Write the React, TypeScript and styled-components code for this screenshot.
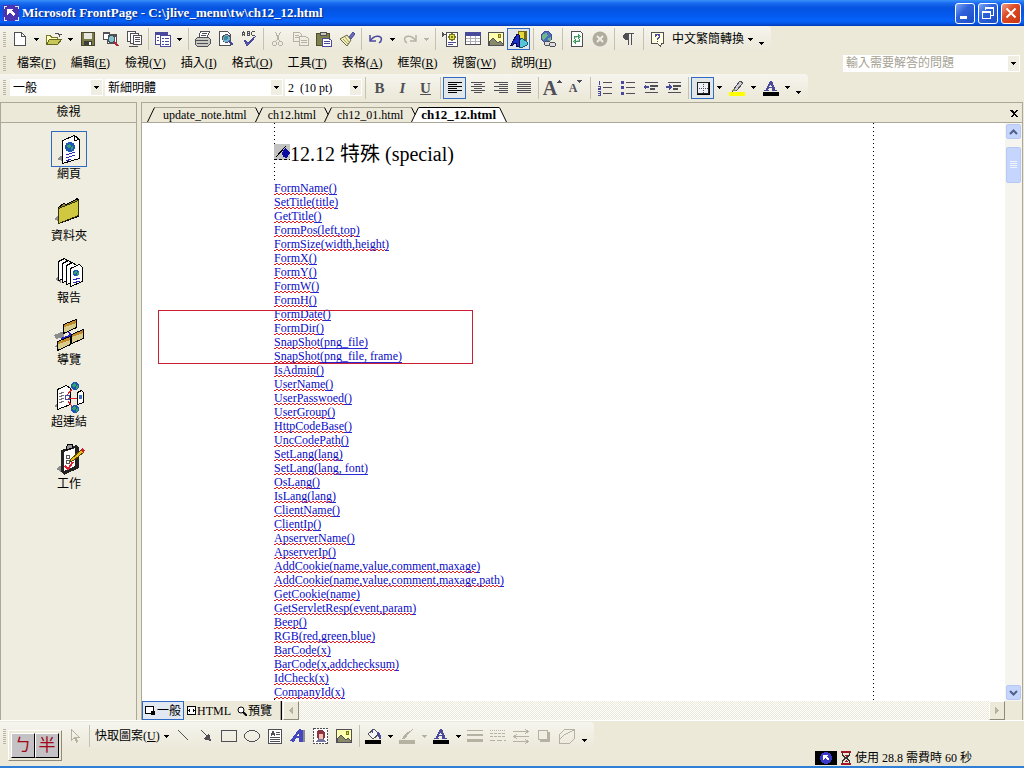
import React from "react";
import styled, { createGlobalStyle, css } from "styled-components";

const GlobalStyle = createGlobalStyle`
  * { box-sizing: border-box; }
  body {
    margin: 0;
    background: #ece9d8;
    color: #000;
    font: 12px/14px "Liberation Serif", "Noto Sans CJK TC", serif;
  }
  button, input, select { font: inherit; color: inherit; margin: 0; padding: 0; border: 0; background: none; border-radius: 0; }
  svg { display: block; flex: none; }
`;

/* ---------- frame ---------- */
const Window = styled.div`
  display: flex;
  flex-direction: column;
  height: 100vh;
  border-bottom: 2px solid #2f7fd8;
  overflow: hidden;
`;

const TitleBar = styled.header`
  display: flex;
  align-items: center;
  flex: none;
  height: 26px;
  padding: 0 3px;
  gap: 3px;
  background: linear-gradient(#3a92fa 0, #1a6cf0 3px, #0553e0 8px, #0459ee 15px, #0663fb 21px, #0450dd 24px, #0338b4 26px);
`;

const Title = styled.h1`
  flex: 1;
  margin: 0;
  font-size: 13px;
  line-height: 16px;
  color: #fff;
  text-shadow: 1px 1px 1px #0a2a80;
  white-space: nowrap;
  overflow: hidden;
`;

const WindowButton = styled.button<{ $close?: boolean }>`
  display: grid;
  place-items: center;
  width: 20px;
  height: 21px;
  border: 1px solid #fff;
  border-radius: 3px;
  background: ${(p) =>
    p.$close
      ? "linear-gradient(135deg, #f0a088, #dd4a24 40%, #c8350f)"
      : "linear-gradient(135deg, #7fa6f2, #2f63dc 40%, #1a4bc4)"};
`;

const BarRow = styled.div<{ $height: number }>`
  display: flex;
  align-items: center;
  justify-content: space-between;
  flex: none;
  height: ${(p) => p.$height}px;
  padding-right: 4px;
`;

const Bar = styled.div`
  display: flex;
  align-items: center;
  height: 100%;
  padding-right: 4px;
  border-radius: 0 4px 4px 0;
  background: linear-gradient(#f6f5ee, #efede0 60%, #ebe8d8);
  white-space: nowrap;
`;

const Grip = styled.span`
  flex: none;
  width: 3px;
  height: 15px;
  margin: 0 2px 0 3px;
  background: repeating-linear-gradient(#b9b6a4 0 1px, transparent 1px 2px);
`;

const ToolButton = styled.button<{ $active?: boolean }>`
  display: grid;
  place-items: center;
  flex: none;
  width: 23px;
  height: 22px;
  ${(p) =>
    p.$active &&
    css`
      border: 1px solid #316ac5;
      background: #e1e6e8;
    `}
`;

const ArrowButton = styled.button`
  display: grid;
  place-items: center;
  flex: none;
  width: 11px;
  height: 22px;
`;

const OverflowButton = styled(ArrowButton)`
  align-items: end;
  padding-bottom: 5px;
`;

const Sep = styled.span`
  flex: none;
  width: 1px;
  height: 22px;
  margin: 0 2px 0 3px;
  background: #c5c2b0;
`;

const TextButton = styled.button`
  display: flex;
  align-items: center;
  gap: 4px;
  height: 22px;
  padding: 0 3px;
  white-space: nowrap;
`;

const MenuButton = styled.button`
  height: 20px;
  padding: 0 8px 0 7px;
  white-space: nowrap;
`;

const MenuNav = styled.nav`
  display: flex;
  align-items: center;
`;

const MenuItems = styled.div`
  display: flex;
  padding-left: 2px;
`;

const Combo = styled.label<{ $width: number; $muted?: boolean }>`
  display: grid;
  grid-template-columns: 1fr 13px;
  align-items: center;
  flex: none;
  width: ${(p) => p.$width}px;
  height: 17px;
  margin-left: 2px;
  background: #fff;
  color: ${(p) => (p.$muted ? "#a5a293" : "#000")};

  select, input {
    grid-area: 1 / 1 / 2 / 3;
    width: 100%;
    height: 17px;
    padding: 0 3px;
    appearance: none;
    outline: 0;
    white-space: pre;
  }
  input::placeholder { color: #a5a293; opacity: 1; }
`;

const ComboArrow = styled.span`
  grid-area: 1 / 2 / 2 / 3;
  display: grid;
  place-items: center;
  height: 15px;
  margin: 1px;
  background: #f0eee2;
  pointer-events: none;
`;

/* ---------- workspace ---------- */
const Workspace = styled.main`
  display: flex;
  flex: 1;
  min-height: 0;
  gap: 4px;
  margin-top: 1px;
  padding-right: 1px;
`;

const Views = styled.aside`
  flex: none;
  width: 137px;
  border: 1px solid #aca899;
  border-width: 1px 1px 0;
  background: #efeddf;
`;

const ViewsTitle = styled.h2`
  margin: 0;
  height: 20px;
  border-bottom: 1px solid #aca899;
  font-size: 12px;
  font-weight: 400;
  line-height: 19px;
  text-align: center;
  background: #ece9d8;
`;

const ViewsList = styled.div`
  display: flex;
  flex-direction: column;
  align-items: center;
  gap: 12px;
  padding: 8px 0 0 1px;
`;

const ViewButton = styled.button`
  display: flex;
  flex-direction: column;
  align-items: center;
  height: 50px;
`;

const ViewIcon = styled.span<{ $active?: boolean }>`
  display: grid;
  place-items: center;
  width: 36px;
  height: 36px;
  border: 1px solid ${(p) => (p.$active ? "#316ac5" : "transparent")};
`;

const DocPanel = styled.section`
  display: flex;
  flex-direction: column;
  flex: 1;
  min-width: 0;
  border: 1px solid #aca899;
  border-bottom: 0;
`;

const TabStrip = styled.div`
  display: flex;
  align-items: flex-end;
  flex: none;
  height: 20px;
  padding-left: 5px;
  border-bottom: 1px solid #aca899;
`;

const TabButton = styled.button<{ $active?: boolean }>`
  height: 15px;
  padding: 0 8px 0 5px;
  border-top: 1px solid #aca899;
  line-height: 14px;

  &:first-of-type { padding-left: 8px; }

  ${(p) =>
    p.$active &&
    css`
      padding: 0 3px 0 2px;
      border-top-color: #000;
      font-size: 13px;
      font-weight: 700;
      background: #fff;
    `}
`;

const CloseDoc = styled.button`
  display: grid;
  place-items: center;
  width: 16px;
  height: 16px;
  margin-left: auto;
`;

const Editor = styled.div`
  display: flex;
  flex: 1;
  min-height: 0;
`;

const Canvas = styled.div`
  flex: 1;
  min-width: 0;
  padding-left: 1px;
  overflow: hidden;
  background: #fff;
`;

const Page = styled.article`
  position: relative;
  max-width: 600px;
  min-height: 100%;
  margin: 0 auto;
  padding-top: 18px;
  background:
    repeating-linear-gradient(#000 0 1px, transparent 1px 4px) 0 0 / 1px 100% no-repeat,
    repeating-linear-gradient(#000 0 1px, transparent 1px 4px) 100% 0 / 1px 100% no-repeat;
`;

const Heading = styled.h2`
  display: flex;
  align-items: center;
  margin: 0 0 14px;
  height: 26px;
  font-size: 20px;
  font-weight: 400;
  line-height: 26px;
  white-space: nowrap;
`;

const Anchor = styled.span`
  align-self: flex-start;
  margin-top: 3px;
  background: #c3c3c3;
`;

const FunctionList = styled.ul`
  margin: 0;
  padding: 0;
  list-style: none;

  li { height: 14px; white-space: nowrap; }
`;

const FunctionLink = styled.a`
  display: inline-block;
  height: 14px;
  color: #0a0ac8;
  text-decoration: none;
  background: #fff;
  box-shadow: inset 0 -1px #2a2ad0;
`;

const Misspelt = styled.span`
  display: inline-block;
  height: 14px;
  background:
    repeating-linear-gradient(90deg, #e02020 0 2px, #fff 2px 4px) 0 100% / 100% 1px no-repeat,
    repeating-linear-gradient(90deg, transparent 0 2px, #e02020 2px 4px) 0 12px / 100% 1px no-repeat;
`;

const Highlight = styled.div`
  position: absolute;
  top: 187px;
  left: -116px;
  width: 315px;
  height: 54px;
  border: 1px solid #cc1f36;
  pointer-events: none;
`;

const VScroll = styled.div`
  display: flex;
  flex-direction: column;
  flex: none;
  width: 17px;
  padding: 1px;
  background: #f5f4ee;
`;

const ScrollButton = styled.button`
  display: grid;
  place-items: center;
  flex: none;
  width: 15px;
  height: 15px;
  border: 1px solid #b6c9f5;
  border-radius: 2px;
  background: #c6d5fd;
`;

const Thumb = styled(ScrollButton)`
  height: 36px;
  margin: 8px 0 auto;
`;

const ViewRow = styled.div`
  display: flex;
  flex: none;
  height: 19px;
`;

const ModeButton = styled.button<{ $active?: boolean }>`
  display: flex;
  align-items: center;
  gap: 1px;
  height: 19px;
  padding: 0 2px;
  border: 1px solid ${(p) => (p.$active ? "#316ac5" : "transparent")};
  background: ${(p) => (p.$active ? "#e1e8f2" : "transparent")};
  white-space: nowrap;
`;

const Splitter = styled.span`
  width: 2px;
  margin: 0 1px 0 5px;
  background: linear-gradient(90deg, #aca899 50%, #000 50%);
`;

const HTrack = styled.div`
  flex: 1;
  background: repeating-conic-gradient(#ece9d8 0 25%, #fff 0 50%) 0 0 / 2px 2px;
`;

const HScrollButton = styled.button`
  display: grid;
  place-items: center;
  width: 16px;
  border: 1px solid #fff;
  border-right-color: #8d8a7b;
  border-bottom-color: #8d8a7b;
  background: #ece9d8;
`;

const Corner = styled.span`
  width: 17px;
`;

/* ---------- footer ---------- */
const Footer = styled.footer`
  position: relative;
  flex: none;
  padding-top: 1px;
  border-top: 1px solid #fff;
`;

const DrawBar = styled(Bar)`
  width: fit-content;
  height: 28px;
`;

const DrawStart = styled.span`
  width: 55px;
`;

const StatusBar = styled.div`
  display: flex;
  justify-content: flex-end;
  align-items: center;
  gap: 3px;
  height: 16px;
  padding-right: 52px;
`;

const StatusBadge = styled.span`
  display: grid;
  place-items: center;
  width: 22px;
  height: 14px;
  background: #000;
`;

const ImePalette = styled.div`
  position: absolute;
  left: 8px;
  top: 9px;
  display: flex;
  padding: 2px;
  border: 1px solid #8d8a7b;
  border-top-color: #fff;
  border-left-color: #fff;
  background: #ece9d8;
`;

const ImeKey = styled.button`
  width: 24px;
  height: 25px;
  border: 1px solid #000;
  border-top-color: #fff;
  border-left-color: #fff;
  background: #c4c2c4;
  color: #a00818;
  font-size: 17px;
  line-height: 22px;
`;

/* ---------- icons ---------- */
const Ico = ({ s = 16, w, h, smooth, children }: { s?: number; w?: number; h?: number; smooth?: boolean; children: React.ReactNode }) => (
  <svg
    width={w ?? s}
    height={h ?? s}
    viewBox={`0 0 ${w ?? s} ${h ?? s}`}
    fill="none"
    stroke="none"
    shapeRendering={smooth ? "auto" : "crispEdges"}
    aria-hidden="true"
  >
    {children}
  </svg>
);

const Down = ({ off }: { off?: boolean }) => (
  <Ico w={5} h={3}><path d="M0 0h5v1h-1v1h-1v1h-1v-1h-1v-1h-1z" fill={off ? "#b5b2a2" : "#000"} /></Ico>
);

const G = "#4f4f55";
const D = "#b5b2a2";
const B = "#4a4a9c";

const icons: Record<string, React.ReactNode> = {
  "新增": <Ico><path d="M2.500 1.500h7l4 4v9h-11z" fill="#fff" stroke={G} /><path d="M9.500 1.500v4h4" stroke={G} /></Ico>,
  "開啟": <Ico><path d="M.5 13.500v-9h4l1 2h6v3" fill="#ffffc0" stroke="#77772e" /><path d="M.5 13.500l3-5h12l-4 5z" fill="#c8c85a" stroke="#66661e" /><path d="M8.500 3.500q2-3 5 0v2m-2-2h4" stroke={G} /></Ico>,
  "儲存": <Ico><path d="M1.500 1.500h13v13h-13z" fill="#7a7a46" stroke="#484830" /><path d="M4 2h8v6H4z" fill="#e7e7e0" /><path d="M4 10h8v4H4z" fill="#3c3c38" /><path d="M9 11h2v3H9z" fill="#fff" /></Ico>,
  "搜尋": <Ico><path d="M.5 1.500h6v2h7v9h-9v-4h-4z" fill="#fff" stroke={G} /><path d="M0 1h7v2H0zM5 4h8v2H5z" fill={G} /><circle cx="8.500" cy="8" r="3.500" fill="#7fc3cf" stroke={G} /><path d="M11 10.500l4 4.500" stroke="#b4283c" strokeWidth="2" /></Ico>,
  "發佈": <Ico><path d="M1.500.5h8v10h-8z" fill="#fff" stroke={G} /><path d="M4.500 2.500h8v10h-8z" fill="#fff" stroke={G} /><path d="M7.500 4.500h8v9h-8z" fill="#fff" stroke={G} /><path d="M9 6.500h5M9 8.500h5M9 10.500h5M3 15.500h9" stroke={G} /></Ico>,
  "窗格": <Ico><path d="M.5 1.500h12v12h-12z" fill="#fff" stroke={B} /><path d="M0 1h13v3H0z" fill={B} /><path d="M5.500 4.500h10v11h-10z" fill="#fff" stroke={B} /><path d="M2 6.500h2M2 9.500h2M7 7.500h2M10 7.500h4M7 10.500h2M10 10.500h4M7 13.500h2M10 13.500h4" stroke={B} /></Ico>,
  "列印": <Ico><path d="M5.500.5h9l-3 7h-8z" fill="#fff" stroke={G} /><path d="M.5 8.500l2-2h11l2 2v4l-3 3h-10l-2-2z" fill="#c9c9c4" stroke={G} /><path d="M1 9.500h12M2 12.500h11M7 2.500h5M6 4.500h5" stroke={G} /></Ico>,
  "預覽列印": <Ico><path d="M1.500.5h8l3 3v11h-11z" fill="#fff" stroke={G} /><circle cx="8.500" cy="7.500" r="4" fill="#6fb5cf" stroke={G} /><circle cx="8" cy="7" r="2" fill="#3f87a0" /><path d="M11 10l4 4" stroke={B} strokeWidth="2" /></Ico>,
  "拼字": <Ico><path d="M1.500 5V2l1-1 1 1v3M2 3.500h1M6.500 0v5M6 .5h2.500v2H6m2.500 0v2H6M13.500 .5h-2l-1 1v2l1 1h2" stroke={G} /><path d="M3 9l3 6 9-10-8 7z" fill="#5b5bb0" stroke={B} /></Ico>,
  "剪下": <Ico><path d="M5.500 1l4 9M10.500 1l-4 9" stroke={D} /><circle cx="4.500" cy="12.500" r="2" stroke={D} /><circle cx="10.500" cy="12.500" r="2" stroke={D} /></Ico>,
  "複製": <Ico><path d="M.5 1.500h6l2 2v7h-8z" stroke={D} /><path d="M6.500 5.500h6l3 2v7h-9z" fill="#f0eee2" stroke={D} /><path d="M2 4.500h4M2 6.500h4M8 9.500h6M8 11.500h6" stroke={D} /></Ico>,
  "貼上": <Ico><path d="M.5 2.500h13v12H.5z" fill="#80804e" stroke="#50502e" /><path d="M4 1h6v3H4z" fill="#c9c9b5" stroke={G} /><path d="M6.500 7.500h6l3 2v6h-9z" fill="#fff" stroke={B} /><path d="M8 10.500h6M8 12.500h6" stroke={B} /></Ico>,
  "複製格式": <Ico smooth><path d="M10 6l4-5 2 2-4 5z" fill="#6a6ab8" stroke={B} /><path d="M1 8l7-4 4 5-4 6z" fill="#f4efb4" stroke="#66663e" /><path d="M4 8l5 5M6 6l4 5" stroke="#a0a070" /></Ico>,
  "復原": <Ico smooth><path d="M2 4v6h6" stroke={B} strokeWidth="1.500" /><path d="M2.500 9.500C6 4 13 4 13.500 8c0 2-1 3-2.500 4" stroke={B} strokeWidth="1.500" /></Ico>,
  "取消復原": <Ico smooth><path d="M14 4v6H8" stroke={D} strokeWidth="1.500" /><path d="M13.500 9.500C10 4 3 4 2.500 8c0 2 1 3 2.500 4" stroke={D} strokeWidth="1.500" /></Ico>,
  "網頁元件": <Ico><path d="M4.500 1.500h11v14h-11z" fill="#fff" stroke={G} /><path d="M0 1l4 2.500L0 6z" fill={G} /><path d="M9 2h2v1h2v2h1v2h-1v2H11v1H9V9H7V7H6V5h1V3h2z" fill="#77771e" /><path d="M8 4h4v4H8z" fill="#e4e04a" /><path d="M9 5h2v2H9z" fill="#77771e" /><path d="M6 11.500h8M6 13.500h5" stroke={B} /></Ico>,
  "插入表格": <Ico><path d="M.5 1.500h15v12H.5z" fill="#fff" stroke={G} /><path d="M0 1h16v4H0z" fill={B} /><path d="M1 7.500h14M1 10.500h14M5.500 5v8M10.500 5v8" stroke="#b0b0b8" /></Ico>,
  "插入圖片": <Ico><path d="M.5 1.500h15v13H.5z" fill="#ffffb0" stroke={G} /><circle cx="11.500" cy="5" r="1.500" fill="#e4d93a" stroke="#77771e" /><path d="M1 14v-3l4-4 5 5 2-2 3 3v1z" fill="#8a8a6a" stroke={G} /></Ico>,
  "繪圖": <Ico s={18}><path d="M8 2l2-1h6v9H8z" fill="#e8d83a" stroke="#77690e" /><path d="M14 2h2v8h-2z" fill="#77690e" /><path d="M9 10l3-2 5 4v3l-4 2H9v-4z" fill="#57c3d6" stroke="#145a70" /><path d="M1 15L7 4l2 1v11H6v-3H4l-1 2z" fill="#1a2fc8" stroke="#0a0a50" /></Ico>,
  "超連結": <Ico><circle cx="6.500" cy="6" r="5.500" fill="#4d6fb8" stroke={B} /><path d="M3 3l4-1 1 3-3 2-2 3-1-4zM8 7l3-1v3l-2 2z" fill="#6fb58a" /><rect x="4.500" y="10.500" width="6" height="4" rx="2" fill="#ddd" stroke={G} /><rect x="9.500" y="11.500" width="6" height="4" rx="2" fill="#ddd" stroke={G} /></Ico>,
  "重新整理": <Ico><path d="M2.500.5h9l2 2v13h-11z" fill="#fff" stroke={G} /><path d="M5.500 8V5.500h4M9.500 3.500v4l2-2zM10.500 8v2.500h-4M6.500 8.500v4l-2-2z" stroke="#3a9a5a" fill="#3a9a5a" fillOpacity=".4" /></Ico>,
  "停止": <Ico smooth><circle cx="8" cy="8" r="7.500" fill="#b0ad9e" /><path d="M5 5l6 6M11 5l-6 6" stroke="#f0eee2" strokeWidth="2" /></Ico>,
  "顯示全部": <Ico><path d="M13 2H6a4 3.500 0 0 0 0 7h1v5h1V3h2v11h1V3h2z" fill={G} /></Ico>,
  "說明": <Ico><path d="M1.500 1.500h12v11h-2l-1 3-3-3h-6z" fill="#ffffe0" stroke={G} /><path d="M5.500 5.500v-1l1-1h2l1 1v2l-2 1v1M7.500 9.500v1" stroke={B} strokeWidth="1.500" /></Ico>,
  "粗體": <Glyphic ch="B" />,
  "斜體": <Glyphic ch="I" italic />,
  "底線": <Glyphic ch="U" under />,
  "靠左": <Lines rows={[14, 9, 14, 9, 14, 9]} color="#000" />,
  "置中": <Lines rows={[14, 8, 14, 8, 14, 8]} align="mid" />,
  "靠右": <Lines rows={[14, 9, 14, 9, 14, 9]} align="end" />,
  "左右對齊": <Lines rows={[14, 14, 14, 14, 14, 14]} />,
  "放大字型": <Grow size={20} up />,
  "縮小字型": <Grow size={12} />,
  "編號": <Ico><path d="M2.500 1v4M1.500 2H3M1 6.500h2v2H1.500v1H4M1 11.500h2v4H1M1 13.500h2" stroke={B} /><path d="M6 2.500h9M6 7.500h9M6 13.500h9" stroke={G} /></Ico>,
  "項目符號": <Ico><path d="M1 1h3v3H1zM1 6h3v3H1zM1 12h3v3H1z" fill={B} /><path d="M6 2.500h9M6 7.500h9M6 13.500h9" stroke={G} /></Ico>,
  "減少縮排": <Ico><path d="M2 2.500h13M2 12.500h13" stroke={G} /><path d="M7 5h8v2H7zM7 8h5v2H7z" fill={G} /><path d="M0 7l3-3v2h3v2H3v2z" fill={B} /></Ico>,
  "增加縮排": <Ico><path d="M2 2.500h13M2 12.500h13" stroke={G} /><path d="M7 5h8v2H7zM7 8h5v2H7z" fill={G} /><path d="M6 7L3 4v2H0v2h3v2z" fill={B} /></Ico>,
  "框線": <Ico><path d="M2 2h12v12H2z" fill="#eef2f8" stroke="#000" strokeWidth="1" /><path d="M2.500 2.500h11v11h-11z" stroke="#222" /><path d="M8.500 4v9M4 8.500h9" stroke={G} strokeDasharray="1 1" /></Ico>,
  "醒目提示": <Ico><path d="M0 12h16v4H0z" fill="#ff0" /><path d="M5 9l6-8 3 2-6 7-4 1z" fill="#d0d0d8" stroke={G} /><path d="M2 11l3-2 2 2z" fill="#8a8a60" /></Ico>,
  "字型色彩": <FontColour />,
  "選取物件": <Ico><path d="M4.500 1.500v11l3-3 2 5 1-1-2-4h4z" stroke={D} /></Ico>,
  "線條": <Ico><path d="M3 2l10 10" stroke={G} /></Ico>,
  "箭號": <Ico><path d="M3 2l6 6" stroke={G} /><path d="M13 13l-2-8-6 6z" fill={G} /></Ico>,
  "矩形": <Ico><path d="M.5 2.500h15v11H.5z" stroke={G} /></Ico>,
  "橢圓": <Ico><ellipse cx="8" cy="8" rx="7.500" ry="5.500" stroke={G} /></Ico>,
  "文字方塊": <Ico><path d="M1.500 1.500h13v14h-13z" fill="#fff" stroke={G} /><path d="M4 8l2-5 2 5M5 6.500h2M9 4.500h4M9 6.500h4M3 9.500h10M3 11.500h10M3 13.500h10" stroke={G} /></Ico>,
  "文字藝術師": <Ico><path d="M0 13l9-12 4 1v12h-4v-4H6l-2 4z" fill="#4646c0" /><path d="M7 8l2-3v3z" fill="#fff" /><path d="M13 2h2v12h-2z" fill="#8a8a90" /></Ico>,
  "美工圖案": <Ico><path d="M.5.5h14v15H.5z" fill="#fff" stroke={G} strokeDasharray="2 1" /><path d="M5 2h5l2 3v5l-2 1V6H6v5l-2-1V5z" fill="#8e3440" /><path d="M6 6h4v5H6z" fill="#f0c0b0" /><path d="M3 13l3-2h4l3 2v1H3z" fill="#7474a0" /></Ico>,
  "填滿色彩": <Ico><path d="M0 12h16v4H0z" fill="#000" /><path d="M3 6l6-5 5 5-6 5z" fill="#f5f5f5" stroke={G} /><path d="M7 5V1M12 4q4 1 3 7l-2-4z" fill={B} stroke={B} /></Ico>,
  "線條色彩": <Ico><path d="M0 12h16v4H0zM3 11l3-5 8-5-6 7-3 3z" fill={D} /></Ico>,
  "線條樣式": <Ico><path d="M0 2h16v1H0zM0 6h16v2H0zM0 11h16v3H0z" fill={D} /></Ico>,
  "虛線樣式": <Ico><path d="M0 2.500h16" stroke={D} strokeDasharray="1 1" /><path d="M0 5.500h16M0 8.500h16" stroke={D} strokeDasharray="3 1" /><path d="M0 12.500h16" stroke={D} strokeDasharray="5 2" /></Ico>,
  "箭號樣式": <Ico><path d="M0 3.500h15M1 8.500h15M0 13.500h15M12 1l3 2.500L12 6M4 6L1 8.500 4 11M12 11l3 2.500-3 2.500" stroke={D} /></Ico>,
  "陰影樣式": <Ico><path d="M4 4h10v10H4z" fill={D} /><path d="M2.500 2.500h9v9h-9z" fill="#f0eee2" stroke={D} /></Ico>,
  "立體樣式": <Ico><path d="M.5 6.500l5-5h10v9l-5 5H.5zM1 11l4-4 10-5" stroke={D} /></Ico>,
};

function Glyphic({ ch, italic, under }: { ch: string; italic?: boolean; under?: boolean }) {
  return (
    <Letter $italic={italic} $under={under}>{ch}</Letter>
  );
}

function Lines({ rows, align, color = G }: { rows: number[]; align?: "mid" | "end"; color?: string }) {
  return (
    <Ico>
      {rows.map((w, i) => (
        <rect key={i} x={1 + (align === "end" ? 14 - w : align === "mid" ? (14 - w) / 2 : 0)} y={2 + i * 2} width={w} height={1} fill={color} />
      ))}
    </Ico>
  );
}

function Grow({ size, up }: { size: number; up?: boolean }) {
  return (
    <GrowBox>
      <GrowLetter $size={size}>A</GrowLetter>
      <Ico w={5} h={16}>{up ? <path d="M2 0h1v1h1v1h1v1H0V2h1V1h1z" fill={G} /> : <path d="M0 0h5v1H4v1H3v1H2V2H1V1H0z" fill={G} />}</Ico>
    </GrowBox>
  );
}

function FontColour() {
  return (
    <Ico>
      <path d="M0 12h16v4H0z" fill="#000" />
      <path d="M2 11l5-10h2l4 10h-3l-1-3H6l-1 3zM6 7h3L8 4z" fill={B} fillRule="evenodd" />
      <path d="M1 10h5v1H1zM9 10h5v1H9z" fill={B} />
    </Ico>
  );
}

const Letter = styled.span<{ $italic?: boolean; $under?: boolean }>`
  font-size: 15px;
  line-height: 18px;
  color: #4f4f55;
  font-weight: 700;
  font-style: ${(p) => (p.$italic ? "italic" : "normal")};
  text-decoration: ${(p) => (p.$under ? "underline" : "none")};
`;

const GrowBox = styled.span`
  display: flex;
  align-items: flex-end;
`;

const GrowLetter = styled.span<{ $size: number }>`
  font-size: ${(p) => p.$size}px;
  font-weight: 700;
  line-height: 16px;
  color: #4f4f55;
`;

/* A row of tools: a name draws its icon button, "|" a divider, "v" a drop arrow, "x" a dimmed one. */
const Tools = ({ items, active }: { items: string; active?: string[] }) => (
  <>
    {items.split(" ").map((name, i) => {
      if (name === "|") return <Sep key={i} />;
      if (name === "v" || name === "x")
        return <ArrowButton key={i} aria-label="更多選項"><Down off={name === "x"} /></ArrowButton>;
      return (
        <ToolButton key={i} aria-label={name} $active={active?.includes(name)}>{icons[name]}</ToolButton>
      );
    })}
  </>
);

const Select = ({ width, label, value }: { width: number; label: string; value: string }) => (
  <Combo $width={width}>
    <select aria-label={label} defaultValue={value}><option value={value}>{value}</option></select>
    <ComboArrow><Down /></ComboArrow>
  </Combo>
);

/* ---------- large view icons ---------- */
const Globe = ({ x, y, r }: { x: number; y: number; r: number }) => (
  <g>
    <circle cx={x} cy={y} r={r} fill="#1c58b0" />
    <path d={`M${x - r + 1} ${y - 1}l${r - 1} -2 1 2 -2 3zM${x + 1} ${y}l2 -1v3l-2 1z`} fill="#34a46c" />
  </g>
);

const Sheet = ({ x, y }: { x: number; y: number }) => (
  <path d={`M${x} ${y + 3}l6 -3 4 3v15l-10 4z`} fill="#fff" stroke="#000" />
);

const viewIcons: Record<string, React.ReactNode> = {
  "網頁": <Ico s={32}><path d="M4 26l8-6v9z" fill="#8c8c8c" /><path d="M9.500 7.500l12-5 5 4v19l-17 5z" fill="#fff" stroke="#000" /><path d="M21.500 2.500v5l5-1" stroke="#000" /><Globe x={17} y={14} r={5} /><path d="M13 22l9-3M13 25l9-3M13 28l5-2" stroke="#2a2ab8" /></Ico>,
  "資料夾": <Ico s={32}><path d="M1 24l6-5v8z" fill="#8c8c8c" /><path d="M5.500 12.500l5-4 3 1 11-6 1 2v16l-20 7z" fill="#8d8d1c" stroke="#000" /><path d="M5.500 13.500l20-8v15l-20 8z" fill="#cfc840" stroke="#33330a" /></Ico>,
  "報告": <Ico s={32}><path d="M2 22l6-4v8z" fill="#8c8c8c" /><Sheet x={5.5} y={1.5} /><Sheet x={9.5} y={3.5} /><Sheet x={13.5} y={5.5} /><path d="M17.500 11.500l9-4 3 3v14l-12 5z" fill="#fff" stroke="#000" /><Globe x={23} y={16} r={3} /><path d="M20 23l7-2M20 26l7-2" stroke="#2a2ab8" /></Ico>,
  "導覽": <Ico s={32}><path d="M1 16l10-4v6l-8 2zM1 28l6-4v5z" fill="#8c8c8c" /><path d="M16 13l2 5M8 20l18-6M10 22v-3M26 12v3" stroke="#2020c0" strokeWidth="2" /><path d="M10.500 5.500l13-5v8l-13 6zM4.500 22.500l13-5v8l-13 6zM18.500 15.500l12-5v9l-12 5z" fill="#d8cd8a" stroke="#000" /><path d="M11 6l12-5v3l-12 4zM5 23l12-5v3l-12 4zM19 16l11-5v3l-11 4z" fill="#c08a2a" /></Ico>,
  "超連結檢視": <Ico s={32}><path d="M1 25l6-4v7z" fill="#8c8c8c" /><path d="M4.500 8.500l9-4 4 3v16l-13 5z" fill="#fff" stroke="#000" /><path d="M6 13l5-2M6 16l5-2M6 19l5-2M6 22l5-2" stroke="#777" /><path d="M14 14l7-8M15 17h10M15 20l6 8" stroke="#e02020" /><path d="M12 14h4v4h-4z" stroke={B} /><Globe x={22} y={5} r={4} /><Globe x={22} y={28} r={4} /><path d="M24.500 11.500l4-2 2 2v10l-6 2z" fill="#fff" stroke="#000" /><path d="M26 14h3v4h-3z" fill="#3d6fc0" /></Ico>,
  "工作": <Ico s={32}><path d="M3 26l7-5v9z" fill="#8c8c8c" /><path d="M8 7l15-5 3 3v20L11 32l-3-3z" fill="#222" /><path d="M11 9l11-4v18l-11 5z" fill="#fff" /><path d="M13 5l2-4h4v4l-6 2z" fill="#9a9a9a" stroke="#000" /><path d="M13 12h3v3h-3zM13 17h3v3h-3z" stroke="#555" /><path d="M12 23l3 3 5-7" stroke="#e02030" strokeWidth="2" /><path d="M18 16l10-9 3 2-10 8-4 2z" fill="#e8c020" stroke="#5a4500" /><path d="M27 7l2-2 3 2-1 3z" fill="#d02020" /></Ico>,
};

const AppMark = () => (
  <Ico>
    <path d="M0 0h16v16H0z" fill="#4a35b0" />
    <path d="M1 4V1h3M12 1h3v3M15 12v3h-3M4 15H1v-3" stroke="#e8e6ff" />
    <path d="M4 4h6L8.500 5.500 12 9l-2 2-3.500-3.500L4 10z" fill="#fff" />
  </Ico>
);

/* [text flagged by the spelling check, remaining text] */
const functions: [string, string][] = [
  ["FormName", "()"], ["SetTitle(title", ")"], ["GetTitle", "()"], ["FormPos(left,top", ")"],
  ["FormSize(width,height", ")"], ["FormX", "()"], ["FormY", "()"], ["FormW", "()"], ["FormH", "()"],
  ["FormDate", "()"], ["FormDir", "()"], ["SnapShot", "(png_file)"], ["SnapShot", "(png_file, frame)"],
  ["IsAdmin", "()"], ["UserName", "()"], ["UserPasswoed", "()"], ["UserGroup", "()"],
  ["HttpCodeBase", "()"], ["UncCodePath", "()"], ["SetLang(lang", ")"], ["SetLang(lang", ", font)"],
  ["OsLang", "()"], ["IsLang(lang", ")"], ["ClientName", "()"], ["ClientIp", "()"],
  ["ApserverName", "()"], ["ApserverIp", "()"], ["AddCookie(name,value,comment,maxage", ")"],
  ["AddCookie(name,value,comment,maxage,path", ")"], ["GetCookie(name", ")"],
  ["GetServletResp(event,param", ")"], ["Beep", "()"], ["RGB(red,green,blue", ")"],
  ["BarCode(x", ")"], ["BarCode(x,addchecksum", ")"], ["IdCheck(x", ")"], ["CompanyId(x", ")"],
];

const menus: [string, string][] = [
  ["檔案", "F"], ["編輯", "E"], ["檢視", "V"], ["插入", "I"], ["格式", "O"],
  ["工具", "T"], ["表格", "A"], ["框架", "R"], ["視窗", "W"], ["說明", "H"],
];

const tabs = ["update_note.html", "ch12.html", "ch12_01.html", "ch12_12.html"];

const Slant = ({ kind }: { kind: "first" | "between" | "active" | "end" }) => (
  <Ico w={8} h={15} smooth>
    {kind === "active" && <path d="M0 15L8 0v15z" fill="#fff" />}
    {kind === "end" && <path d="M0 0l8 15H0z" fill="#fff" />}
    {kind !== "end" && <path d="M.5 15L7.500.5" stroke="#000" />}
    {(kind === "between" || kind === "active") && <path d="M.5.5l3.500 7" stroke="#000" />}
    {kind === "end" && <path d="M.5.5l7 14.500" stroke="#000" />}
  </Ico>
);

export default function App() {
  return (
    <Window>
      <GlobalStyle />
      <TitleBar>
        <AppMark />
        <Title>Microsoft FrontPage - C:\jlive_menu\tw\ch12_12.html</Title>
        <WindowButton aria-label="最小化"><Ico><path d="M3 11h7v3H3z" fill="#fff" /></Ico></WindowButton>
        <WindowButton aria-label="還原"><Ico><path d="M5.500 5V3h8v7H11M5 2.500h9" stroke="#fff" /><path d="M2.500 6.500h8v7h-8zM2 7.500h9" stroke="#fff" /></Ico></WindowButton>
        <WindowButton aria-label="關閉" $close><Ico smooth><path d="M3.500 3.500l9 9M12.500 3.500l-9 9" stroke="#fff" strokeWidth="2" /></Ico></WindowButton>
      </TitleBar>

      <BarRow $height={26}>
        <Bar>
          <Grip />
          <Tools
            active={["繪圖"]}
            items="新增 v 開啟 v 儲存 搜尋 發佈 | 窗格 v | 列印 預覽列印 拼字 | 剪下 複製 貼上 複製格式 | 復原 v 取消復原 x | 網頁元件 插入表格 插入圖片 繪圖 | 超連結 | 重新整理 停止 | 顯示全部 | 說明"
          />
          <TextButton>中文繁簡轉換<Down /></TextButton>
          <OverflowButton aria-label="工具列選項"><Down /></OverflowButton>
        </Bar>
      </BarRow>

      <BarRow $height={22}>
        <MenuNav>
          <Grip />
          <MenuItems>
            {menus.map(([name, key]) => (
              <MenuButton key={key}>{name}(<u>{key}</u>)</MenuButton>
            ))}
          </MenuItems>
        </MenuNav>
        <Combo $width={177} $muted>
          <input aria-label="問題" placeholder="輸入需要解答的問題" />
          <ComboArrow><Down /></ComboArrow>
        </Combo>
      </BarRow>

      <BarRow $height={27}>
        <Bar>
          <Grip />
          <Select width={93} label="樣式" value="一般" />
          <Select width={178} label="字型" value="新細明體" />
          <Select width={77} label="字型大小" value={"2\u00a0 (10 pt)"} />
          <Tools
            active={["靠左", "框線"]}
            items="| 粗體 斜體 底線 | 靠左 置中 靠右 左右對齊 | 放大字型 縮小字型 | 編號 項目符號 減少縮排 增加縮排 | 框線 v 醒目提示 v 字型色彩 v"
          />
          <OverflowButton aria-label="工具列選項"><Down /></OverflowButton>
        </Bar>
      </BarRow>

      <Workspace>
        <Views>
          <ViewsTitle>檢視</ViewsTitle>
          <ViewsList>
            {["網頁", "資料夾", "報告", "導覽", "超連結", "工作"].map((name, i) => (
              <ViewButton key={name}>
                <ViewIcon $active={i === 0}>{viewIcons[name === "超連結" ? "超連結檢視" : name]}</ViewIcon>
                {name}
              </ViewButton>
            ))}
          </ViewsList>
        </Views>

        <DocPanel>
          <TabStrip>
            {tabs.map((name, i) => {
              const active = i === tabs.length - 1;
              return (
                <React.Fragment key={name}>
                  <Slant kind={i === 0 ? "first" : active ? "active" : "between"} />
                  <TabButton $active={active}>{name}</TabButton>
                </React.Fragment>
              );
            })}
            <Slant kind="end" />
            <CloseDoc aria-label="關閉文件"><Ico s={8}><path d="M0 0h2l2 2 2-2h2L5 4l3 3H6L4 5 2 7H0l3-3z" fill="#000" /></Ico></CloseDoc>
          </TabStrip>

          <Editor>
            <Canvas>
              <Page>
                <Heading>
                  <Anchor><Ico><path d="M2 13L12 2" stroke="#000" /><path d="M8 9l3-5 5 5-3 5-4-1z" fill="#0a0aa0" /><path d="M0 15.500h16" stroke="#000" strokeDasharray="3 2" /></Ico></Anchor>
                  12.12 特殊 (special)
                </Heading>
                <FunctionList>
                  {functions.map(([flagged, rest]) => (
                    <li key={flagged + rest}>
                      <FunctionLink href="#"><Misspelt>{flagged}</Misspelt>{rest}</FunctionLink>
                    </li>
                  ))}
                </FunctionList>
                <Highlight />
              </Page>
            </Canvas>
            <VScroll>
              <ScrollButton aria-label="向上捲動"><Ico w={9} h={6} smooth><path d="M1 5l3.500-3.500L8 5" stroke="#4d6185" strokeWidth="2" /></Ico></ScrollButton>
              <Thumb aria-label="捲軸"><Ico w={7} h={8}><path d="M0 .5h7M0 2.500h7M0 4.500h7M0 6.500h7" stroke="#eef4fe" /></Ico></Thumb>
              <ScrollButton aria-label="向下捲動"><Ico w={9} h={6} smooth><path d="M1 1l3.500 3.500L8 1" stroke="#4d6185" strokeWidth="2" /></Ico></ScrollButton>
            </VScroll>
          </Editor>

          <ViewRow>
            <ModeButton $active><Ico w={11} h={9}><path d="M.5.5h8v7h-8z" fill="#fff" stroke="#000" /><path d="M6 5h4v4H6z" fill="#000" /></Ico>一般</ModeButton>
            <ModeButton><Ico s={9}><path d="M.5.5h8v8h-8z" fill="#fff" stroke="#000" /><path d="M3 3L2 4.500 3 6M6 3l1 1.500L6 6" stroke="#000" /></Ico>HTML</ModeButton>
            <ModeButton><Ico s={10} smooth><circle cx="4" cy="4" r="3" fill="#fff" stroke="#000" /><path d="M6 6l4 4" stroke="#000" strokeWidth="2" /></Ico>預覽</ModeButton>
            <Splitter />
            <HScrollButton aria-label="向左捲動"><Ico w={4} h={7}><path d="M4 0v7L0 3.500z" fill={D} /></Ico></HScrollButton>
            <HTrack />
            <HScrollButton aria-label="向右捲動"><Ico w={4} h={7}><path d="M0 0v7l4-3.500z" fill={D} /></Ico></HScrollButton>
            <Corner />
          </ViewRow>
        </DocPanel>
      </Workspace>

      <Footer>
        <DrawBar>
          <Grip />
          <DrawStart />
          <Tools items="選取物件 |" />
          <TextButton><span>快取圖案(<u>U</u>)</span><Down /></TextButton>
          <Tools items="線條 箭號 矩形 橢圓 文字方塊 文字藝術師 美工圖案 插入圖片 | 填滿色彩 v 線條色彩 x 字型色彩 v 線條樣式 虛線樣式 箭號樣式 陰影樣式 立體樣式" />
          <OverflowButton aria-label="工具列選項"><Down /></OverflowButton>
        </DrawBar>
        <StatusBar>
          <StatusBadge><Ico s={12}><circle cx="6" cy="6" r="6" fill="#3a3ac8" /><path d="M3 3h5L6.500 4.500 9 7 7.500 8.500 5 6 3 8z" fill="#fff" /></Ico></StatusBadge>
          <Ico w={12} h={14}><path d="M1 0h10v2H1zM1 12h10v2H1z" fill="#a01828" /><path d="M2.500 2v2l3 3-3 3v2M9.500 2v2l-3 3 3 3v2" stroke="#333" /><path d="M4 4h4L6 6zM4 11l2-2 2 2z" fill="#a01828" /></Ico>
          <span>使用 28.8 需費時 60 秒</span>
        </StatusBar>
        <ImePalette>
          <ImeKey>ㄅ</ImeKey>
          <ImeKey>半</ImeKey>
        </ImePalette>
      </Footer>
    </Window>
  );
}
